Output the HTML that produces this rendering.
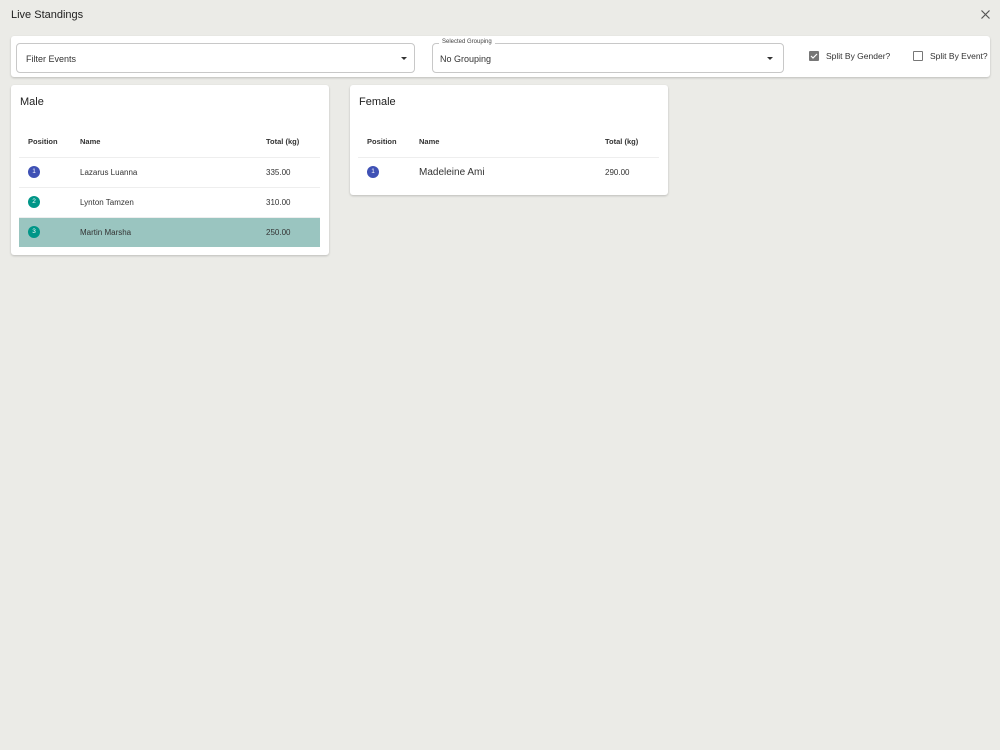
<!DOCTYPE html>
<html><head><style>
*{box-sizing:border-box;margin:0;padding:0}
body{width:1000px;height:750px;background:#ebebe7;font-family:"Liberation Sans",sans-serif;color:#212121;position:relative;overflow:hidden}
.abs{position:absolute;white-space:nowrap}
.card{position:absolute;background:#fff;border-radius:3px;box-shadow:0 1px 2px rgba(0,0,0,.2)}
.field{position:absolute;border:1px solid #c8c8c8;border-radius:4px;height:30px;top:7px;font-size:9px;color:#333}
.field span{position:absolute;left:9px;top:10px}
.arr{position:absolute;top:13px;width:0;height:0;border-left:3.5px solid transparent;border-right:3.5px solid transparent;border-top:3.5px solid #333}
.row{position:absolute;left:8px;width:301px;height:30px;border-top:1px solid #eee;font-size:8px;color:#333;white-space:nowrap}
.row div{position:absolute;top:10px}
.badge{position:absolute;left:9px;top:8px!important;width:12px;height:12px;border-radius:50%;color:#fff;font-size:6.5px;text-align:center;line-height:12px}
.h{position:absolute;top:52px;font-size:7.5px;font-weight:bold;color:#333}
</style></head><body>
<div class="abs" style="left:11px;top:9px;font-size:11px">Live Standings</div>
<svg class="abs" style="left:981px;top:10px" width="9" height="9"><path d="M0.5 0.5L8.5 8.5M8.5 0.5L0.5 8.5" stroke="#555" stroke-width="1.2"/></svg>
<div class="card" style="left:11px;top:36px;width:979px;height:41px">
 <div class="field" style="left:5px;width:399px"><span>Filter Events</span><div class="arr" style="left:384px"></div></div>
 <div class="field" style="left:421px;width:352px"><span style="left:7px">No Grouping</span><div class="arr" style="left:334px"></div>
  <div class="abs" style="left:6px;top:-5px;background:#fff;padding:0 3px;font-size:6px;color:#444">Selected Grouping</div></div>
 <div class="abs" style="left:798px;top:15px;width:10px;height:10px;background:#777;border-radius:1px"><svg width="10" height="10" style="display:block"><path d="M2 5L4 7L8 3" stroke="#fff" stroke-width="1.2" fill="none"/></svg></div>
 <div class="abs" style="left:815px;top:15px;font-size:8.5px;color:#333">Split By Gender?</div>
 <div class="abs" style="left:902px;top:15px;width:10px;height:10px;border:1.3px solid #777;border-radius:1px"></div>
 <div class="abs" style="left:919px;top:15px;font-size:8.5px;color:#333">Split By Event?</div>
</div>
<div class="card" style="left:11px;top:85px;width:318px;height:170px">
 <div class="abs" style="left:9px;top:11px;font-size:11px">Male</div>
 <div class="h" style="left:17px">Position</div><div class="h" style="left:69px">Name</div><div class="h" style="left:255px">Total (kg)</div>
 <div class="row" style="top:72px"><div class="badge" style="background:#3f51b5">1</div><div style="left:61px">Lazarus Luanna</div><div style="left:247px">335.00</div></div>
 <div class="row" style="top:102px"><div class="badge" style="background:#009688">2</div><div style="left:61px">Lynton Tamzen</div><div style="left:247px">310.00</div></div>
 <div class="row" style="top:132px;background:#9ac5c0"><div class="badge" style="background:#009688">3</div><div style="left:61px">Martin Marsha</div><div style="left:247px">250.00</div></div>
</div>
<div class="card" style="left:350px;top:85px;width:318px;height:110px">
 <div class="abs" style="left:9px;top:11px;font-size:11px">Female</div>
 <div class="h" style="left:17px">Position</div><div class="h" style="left:69px">Name</div><div class="h" style="left:255px">Total (kg)</div>
 <div class="row" style="top:72px"><div class="badge" style="background:#3f51b5">1</div><div style="left:61px;top:9px;font-size:10px">Madeleine Ami</div><div style="left:247px">290.00</div></div>
</div>
</body></html>
